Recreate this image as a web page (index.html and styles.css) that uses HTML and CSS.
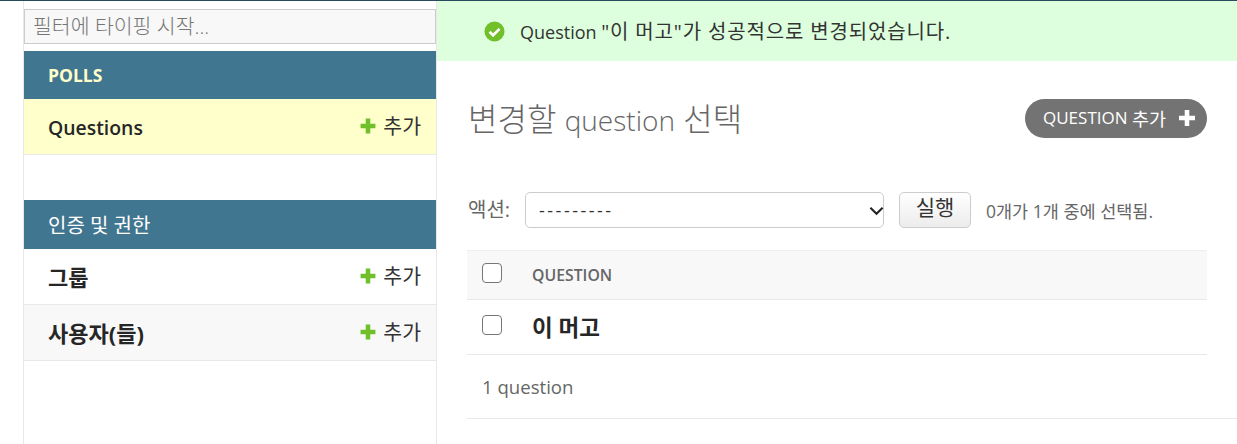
FILE: index.html
```html
<!DOCTYPE html>
<html lang="ko">
<head>
<meta charset="utf-8">
<title>변경할 question 선택</title>
<link rel="stylesheet" href="styles.css">
</head>
<body>
<div class="topline"></div>
<div class="page">
  <aside class="sidebar">
    <input class="filter" type="text" placeholder="필터에 타이핑 시작...">
    <section class="module">
      <h2 class="module-head latin">POLLS</h2>
      <div class="module-row current">
        <a class="model latin-model">Questions</a>
        <a class="add"><svg class="plus" viewBox="0 0 14 14"><path d="M5 .5h4V5h4.500v4H9v4.500H5V9H.5V5H5z" fill="#70bf2b"/></svg>추가</a>
      </div>
    </section>
    <section class="module second">
      <h2 class="module-head">인증 및 권한</h2>
      <div class="module-row">
        <a class="model">그룹</a>
        <a class="add"><svg class="plus" viewBox="0 0 14 14"><path d="M5 .5h4V5h4.500v4H9v4.500H5V9H.5V5H5z" fill="#70bf2b"/></svg>추가</a>
      </div>
      <div class="module-row alt">
        <a class="model">사용자(들)</a>
        <a class="add"><svg class="plus" viewBox="0 0 14 14"><path d="M5 .5h4V5h4.500v4H9v4.500H5V9H.5V5H5z" fill="#70bf2b"/></svg>추가</a>
      </div>
    </section>
  </aside>
  <main class="main">
    <div class="message">
      <svg class="check" viewBox="0 0 22 22"><circle cx="11" cy="11" r="10.500" fill="#70bf2b"/><path d="M5.800 11.300l3.700 3.700 6.800-6.800" fill="none" stroke="#fff" stroke-width="2.800"/></svg>
      <span class="msg-text">Question <span class="ko-msg">"이 머고"가 성공적으로 변경되었습니다.</span></span>
    </div>
    <div class="content">
      <div class="title-row">
        <h1 class="title">변경할 <span class="title-latin">question</span> 선택</h1>
        <a class="addlink">QUESTION <span class="ko-add">추가</span><svg class="plus-white" viewBox="0 0 14 14"><path d="M5 0h4v5h5v4H9v5H5V9H0V5h5z" fill="#fff"/></svg></a>
      </div>
      <div class="actions">
        <label class="action-label" for="act">액션:</label>
        <div class="select-wrap">
          <select class="action-select" id="act"><option>---------</option></select>
          <svg class="select-arrow" viewBox="0 0 16 10"><path d="M1.500 1.500L8 8l6.500-6.500" fill="none" stroke="#222" stroke-width="2.200"/></svg>
        </div>
        <button class="go" type="button">실행</button>
        <span class="counter">0개가 1개 중에 선택됨.</span>
      </div>
      <div class="thead">
        <span class="box"></span>
        <span class="th">QUESTION</span>
      </div>
      <div class="trow">
        <span class="box"></span>
        <a class="td">이 머고</a>
      </div>
      <div class="paginator">1 question</div>
    </div>
  </main>
</div>
</body>
</html>
```
FILE: styles.css
```css
* { box-sizing: border-box; }
html, body { margin: 0; padding: 0; height: 100%; overflow: hidden; }
body {
  background: #fff;
  color: #333;
  font-family: "Open Sans", "Noto Sans CJK KR", sans-serif;
  font-size: 18px;
}
.topline { height: 1px; background: #264b5d; }
.page { display: flex; height: 443px; padding-left: 23px; }
.sidebar {
  width: 414px;
  flex: none;
  border-left: 1px solid #e8e8e8;
  border-right: 1px solid #e8e8e8;
  padding-top: 8px;
}
.filter {
  display: block;
  width: 100%;
  height: 35px;
  border: 1px solid #ccc;
  background: #f8f8f8;
  padding: 0 8px 2px;
  font-family: inherit;
  font-size: 20.500px;
  font-weight: 300;
  color: #333;
  outline: 0;
}
.filter::placeholder { color: #757575; opacity: 1; }
.module { margin-top: 7px; }
.module.second { margin-top: 45px; }
.module-head {
  margin: 0;
  height: 49px;
  background: #417690;
  color: #fff;
  font-size: 20px;
  font-weight: 400;
  padding: 0 0 0 24px;
  display: flex;
  align-items: center;
}
.module-head.latin { height: 48px; padding: 0 0 0 24px; font-size: 17.500px; font-weight: 700; color: #ffc; }
.module-row {
  height: 56px;
  border-bottom: 1px solid #e8e8e8;
  display: flex;
  align-items: center;
  justify-content: space-between;
  padding: 0 15px 0 24px;
}
.module-row.current { background: #ffc; }
.module-row.alt { background: #f8f8f8; }
.model { font-size: 22px; font-weight: 700; color: #262626; padding-bottom: 2px; }
.model.latin-model { font-size: 19.400px; font-weight: 600; padding: 2px 0 0; }
.add { display: flex; align-items: center; font-size: 20.500px; color: #333; line-height: 1; }
.plus { width: 16px; height: 16px; margin-right: 7px; margin-top: -2px; }
.main { flex: 1; min-width: 0; }
.message {
  height: 60px;
  background: #dfd;
  display: flex;
  align-items: center;
  padding-left: 47px;
  font-size: 18px;
  color: #333;
}
.msg-text { margin-top: -2px; }
.ko-msg { font-size: 20px; letter-spacing: .85px; }
.check { width: 21px; height: 21px; margin-right: 15px; }
.content { padding: 0 0 0 30px; }
.title-row {
  width: 740px;
  margin-top: 38px;
  height: 39px;
  display: flex;
  align-items: center;
  justify-content: space-between;
}
.title { margin: -3px 0 0 1px; font-size: 32px; font-weight: 300; color: #666; }
.title-latin { font-size: 28px; }
.addlink {
  height: 39px;
  width: 182px;
  border-radius: 20px;
  background: #737373;
  color: #fff;
  font-size: 17px;
  display: flex;
  align-items: center;
  padding: 0 12px 2px 18px;
  white-space: pre;
}
.ko-add { font-size: 18.500px; }
.plus-white { width: 16px; height: 16px; margin-left: auto; }
.actions {
  width: 740px;
  margin-top: 54px;
  height: 36px;
  display: flex;
  align-items: center;
}
.action-label { font-size: 20px; color: #666; width: 58px; flex: none; padding: 0 0 3px 1px; }
.select-wrap { position: relative; width: 359px; height: 36px; flex: none; }
.action-select {
  appearance: none;
  width: 100%;
  height: 36px;
  display: block;
  border: 1px solid #ccc;
  border-radius: 5px;
  background: #fff;
  font-family: inherit;
  font-size: 18px;
  letter-spacing: 2.500px;
  color: #333;
  padding: 0 13px;
}
.select-arrow {
  position: absolute;
  right: 0;
  top: 14px;
  width: 15px;
  height: 10px;
  pointer-events: none;
}
.go {
  margin-left: 15px;
  width: 72px;
  height: 36px;
  border: 1px solid #ccc;
  border-radius: 5px;
  background: linear-gradient(#fff, #ececec);
  font-family: inherit;
  font-size: 21px;
  line-height: 1;
  color: #333;
  padding: 0 0 5px;
}
.counter { margin-left: 15px; font-size: 17.500px; color: #666; }
.thead {
  width: 740px;
  margin-top: 22px;
  height: 50px;
  background: #f8f8f8;
  border-top: 1px solid #eee;
  border-bottom: 1px solid #e8e8e8;
  display: flex;
  align-items: center;
  padding-left: 15px;
}
.box {
  width: 20px;
  height: 20px;
  flex: none;
  border: 1.500px solid #767676;
  border-radius: 4px;
  background: #fff;
  margin-top: -4px;
}
.th { margin-left: 30px; font-size: 15.800px; font-weight: 600; color: #666; }
.trow {
  width: 740px;
  height: 55px;
  border-bottom: 1px solid #e8e8e8;
  display: flex;
  align-items: center;
  padding-left: 15px;
}
.td { margin-left: 30px; font-size: 22.500px; font-weight: 700; color: #262626; padding-bottom: 2px; }
.paginator {
  height: 64px;
  border-bottom: 1px solid #e8e8e8;
  display: flex;
  align-items: center;
  padding-left: 15px;
  font-size: 18.600px;
  color: #666;
}
```
